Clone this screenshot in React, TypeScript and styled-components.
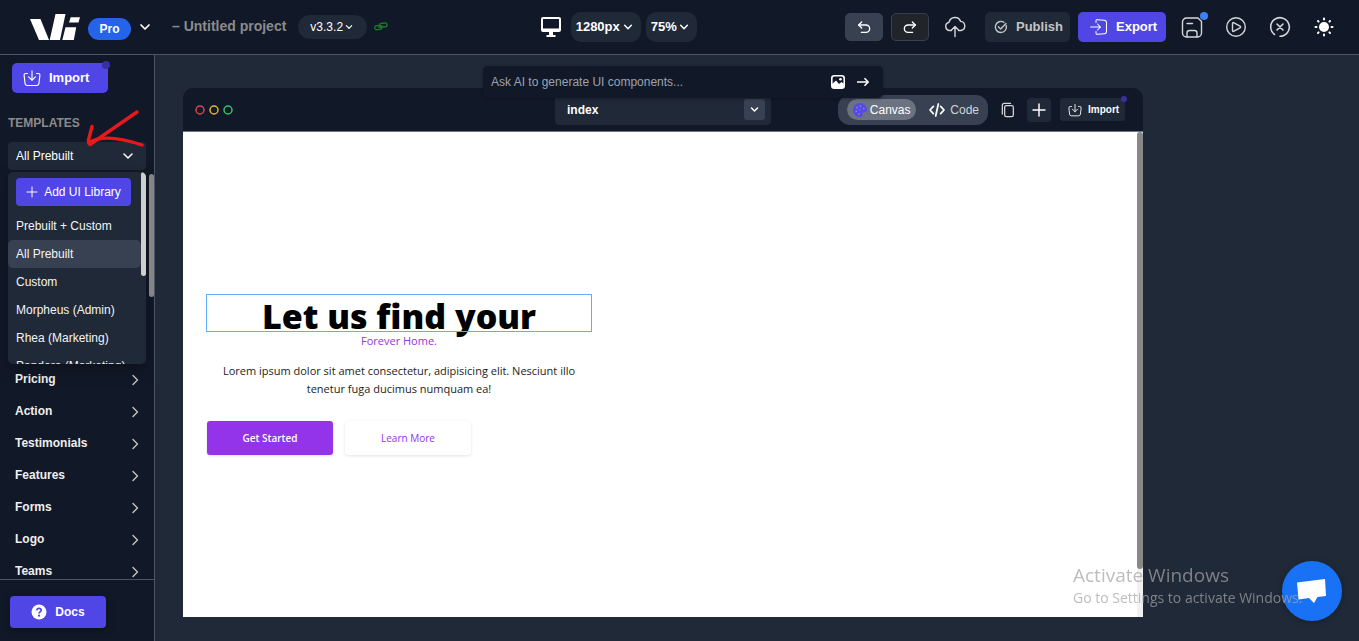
import React from "react";
import styled, { createGlobalStyle, css } from "styled-components";

const GlobalStyle = createGlobalStyle`
  *, *::before, *::after { box-sizing: border-box; }
  html, body, #root { height: 100%; }
  body {
    margin: 0;
    overflow: hidden;
    background: #1f2937;
    color: #fff;
    font: 12px/16px "Liberation Sans", Arial, sans-serif;
  }
  button, select, input { font: inherit; color: inherit; border: 0; margin: 0; padding: 0; background: none; }
  button { cursor: pointer; }
  h1, h2, p, ul { margin: 0; padding: 0; }
  ul { list-style: none; }
  svg { display: block; flex: none; }
`;

const Page = styled.div`
  display: flex;
  flex-direction: column;
  height: 100vh;
`;

/* ---------- top bar ---------- */

const Header = styled.header`
  display: flex;
  flex: none;
  align-items: center;
  justify-content: space-between;
  height: 55px;
  padding: 0 23px 0 30px;
  background: #111827;
  border-bottom: 1px solid #4b5563;
`;

const Group = styled.div<{ $gap?: number }>`
  display: flex;
  align-items: center;
  gap: ${(p) => p.$gap ?? 8}px;
`;

const Actions = styled(Group)`
  margin-left: 4px;
`;

const PlanBadge = styled.button`
  display: flex;
  align-items: center;
  justify-content: center;
  width: 43px;
  height: 22px;
  margin-top: 3px;
  border-radius: 11px;
  background: #2563eb;
  font-weight: 700;
`;

const PlainButton = styled.button`
  display: flex;
  align-items: center;
  justify-content: center;
`;

const ProjectTitle = styled.h1`
  margin: 0 4px 2px 13px;
  color: #8b8b8b;
  font-size: 14px;
  line-height: 20px;
  font-weight: 700;
  white-space: nowrap;
`;

const LinkMark = styled.a`
  display: block;
  padding: 0 4px;
  color: #1f7a2c;
`;

const SelectBox = styled.div<{ $width?: number; $height: number; $radius: number; $end: number }>`
  display: grid;
  align-items: center;
  width: ${(p) => (p.$width ? `${p.$width}px` : "100%")};
  height: ${(p) => p.$height}px;
  border-radius: ${(p) => p.$radius}px;
  background: #1f2937;
  > * { grid-area: 1 / 1; }
  > svg, > span { justify-self: end; margin-right: ${(p) => p.$end}px; pointer-events: none; }
`;

const Select = styled.select<{ $pad: number; $bold?: boolean; $size?: number }>`
  appearance: none;
  width: 100%;
  height: 100%;
  padding-left: ${(p) => p.$pad}px;
  font-size: ${(p) => p.$size ?? 12}px;
  font-weight: ${(p) => (p.$bold ? 700 : 400)};
  option { color: #fff; background: #1f2937; }
`;

const HistoryButton = styled.button<{ $dim?: boolean }>`
  display: flex;
  align-items: center;
  justify-content: center;
  width: 38px;
  height: 28px;
  border-radius: 5px;
  background: ${(p) => (p.$dim ? "#212429" : "#374151")};
  border: 1px solid #374151;
`;

const ActionButton = styled.button<{ $primary?: boolean; $width: number; $pad: number }>`
  position: relative;
  display: flex;
  align-items: center;
  gap: 8px;
  width: ${(p) => p.$width}px;
  height: 30px;
  padding-left: ${(p) => p.$pad}px;
  border-radius: 5px;
  background: ${(p) => (p.$primary ? "#4f46e5" : "#1f2937")};
  color: ${(p) => (p.$primary ? "#fff" : "#c4c4c4")};
  font-size: 13px;
  font-weight: 700;
`;

const IconButton = styled.button<{ $width?: number }>`
  position: relative;
  display: flex;
  align-items: center;
  justify-content: center;
  width: ${(p) => p.$width ?? 24}px;
  height: 24px;
  color: #d4d6da;
`;

const Dot = styled.span<{ $color: string; $top: number; $right: number; $size: number }>`
  position: absolute;
  top: ${(p) => p.$top}px;
  right: ${(p) => p.$right}px;
  width: ${(p) => p.$size}px;
  height: ${(p) => p.$size}px;
  border-radius: 50%;
  background: ${(p) => p.$color};
`;

/* ---------- sidebar ---------- */

const Body = styled.div`
  display: flex;
  flex: 1;
  min-height: 0;
`;

const Sidebar = styled.aside`
  position: relative;
  display: flex;
  flex: none;
  flex-direction: column;
  width: 155px;
  background: #111827;
  border-right: 1px solid #4b5563;
`;

const SideScroll = styled.div`
  flex: 1;
  min-height: 0;
  overflow: hidden;
  padding: 8px 8px 0;
`;

const ImportRow = styled.div`
  padding-left: 4px;
`;

const SideHeading = styled.h2`
  margin: 22px 0 11px;
  color: #8b8b8b;
  font-size: 12px;
  line-height: 16px;
  font-weight: 700;
`;

const Menu = styled.div`
  position: relative;
  height: 192px;
  margin-top: 2px;
  padding: 6px 5px 0 0;
  overflow: hidden;
  border-radius: 5px;
  background: #1f2937;
  box-shadow: 0 6px 16px rgba(0, 0, 0, 0.25);
`;

const AddLibrary = styled.button`
  display: flex;
  align-items: center;
  justify-content: center;
  gap: 6px;
  width: 115px;
  height: 28px;
  margin: 0 0 6px 8px;
  border-radius: 4px;
  background: #4f46e5;
  white-space: nowrap;
`;

const MenuItem = styled.button<{ $active?: boolean }>`
  display: block;
  width: 100%;
  height: 28px;
  padding-left: 8px;
  border-radius: 5px;
  background: ${(p) => (p.$active ? "#374151" : "transparent")};
  color: #f3f4f6;
  text-align: left;
  white-space: nowrap;
`;

const Thumb = styled.span<{ $top: number; $height: number; $light?: boolean }>`
  position: absolute;
  top: ${(p) => p.$top}px;
  right: 0;
  width: 5px;
  height: ${(p) => p.$height}px;
  border-radius: 3px;
  background: ${(p) => (p.$light ? "#cfcfcf" : "#858585")};
`;

const Category = styled.button`
  display: flex;
  align-items: center;
  justify-content: space-between;
  width: 100%;
  height: 32px;
  padding: 0 5px 0 7px;
  color: #efefef;
  font-weight: 700;
  span { padding-bottom: 2px; }
  svg { color: #bdbdbd; }
`;

const SideFooter = styled.div`
  flex: none;
  height: 62px;
  padding: 16px 10px;
  border-top: 1px solid #4b5563;
`;

const DocsLink = styled.a`
  display: flex;
  align-items: center;
  justify-content: center;
  gap: 8px;
  width: 96px;
  height: 32px;
  border-radius: 4px;
  background: #4f46e5;
  color: #fff;
  font-weight: 700;
  text-decoration: none;
  box-shadow: 0 2px 8px rgba(0, 0, 0, 0.3);
`;

const Arrow = styled.svg`
  position: absolute;
  top: 52px;
  left: 84px;
  pointer-events: none;
`;

/* ---------- workspace ---------- */

const Workspace = styled.main`
  position: relative;
  display: flex;
  flex: 1;
  min-width: 0;
  padding: 33px 28px 24px;
`;

const Prompt = styled.form`
  position: absolute;
  z-index: 2;
  top: 11px;
  left: 328px;
  display: flex;
  align-items: center;
  gap: 12px;
  width: 400px;
  height: 32px;
  padding: 0 14px 0 8px;
  border-radius: 5px;
  background: #111827;
  box-shadow: 0 1px 3px rgba(0, 0, 0, 0.3);
  input { flex: 1; min-width: 0; outline: 0; }
  input::placeholder { color: #9ca3af; opacity: 1; }
`;

const Frame = styled.section`
  display: flex;
  flex: 1;
  flex-direction: column;
  max-width: 960px;
`;

const FrameBar = styled.div`
  display: grid;
  grid-template-columns: 1fr 216px 1fr;
  align-items: center;
  flex: none;
  height: 44px;
  padding: 0 12px;
  border-radius: 10px 10px 0 0;
  border-bottom: 1px solid #6b7280;
  background: #111827;
`;

const Chip = styled.span`
  display: flex;
  align-items: center;
  justify-content: center;
  width: 21px;
  height: 21px;
  border-radius: 3px;
  background: #374151;
`;

const Tools = styled.div`
  display: flex;
  align-items: center;
  justify-content: flex-end;
  gap: 9px;
  padding-right: 6px;
`;

const ModeSwitch = styled.div`
  display: flex;
  align-items: center;
  width: 150px;
  height: 30px;
  padding: 0 9px;
  gap: 13px;
  border-radius: 12px;
  background: #374151;
`;

const ModeButton = styled.button<{ $active?: boolean }>`
  display: flex;
  align-items: center;
  justify-content: center;
  height: 21px;
  ${(p) =>
    p.$active
      ? css`gap: 3px; width: 70px; border-radius: 11px; background: #6b7280; color: #fff;`
      : css`gap: 5px; color: #d1d5db; svg { color: #fff; }`}
`;

const SquareButton = styled.button`
  display: flex;
  align-items: center;
  justify-content: center;
  width: 24px;
  height: 24px;
  border-radius: 4px;
  background: #1f2937;
`;

const SmallImport = styled.button`
  position: relative;
  display: flex;
  align-items: center;
  gap: 6px;
  width: 65px;
  height: 23px;
  padding-left: 8px;
  border-radius: 3px;
  background: #1f2937;
  font-size: 10px;
  font-weight: 700;
`;

const Preview = styled.div`
  position: relative;
  display: flex;
  flex: 1;
  align-items: center;
  padding: 0 24px;
  background: #fff;
  color: #1c1c1c;
  font-family: "Open Sans", "Noto Sans", sans-serif;
`;

const PreviewTrack = styled.span`
  position: absolute;
  top: 0;
  right: 0;
  bottom: 0;
  width: 6px;
  background: #f1f1f1;
  &::before {
    content: "";
    display: block;
    height: 90%;
    border-radius: 3px;
    background: #888;
  }
`;

const Hero = styled.div`
  width: 384px;
  text-align: center;
`;

const HeroTitle = styled.h2`
  height: 36px;
  outline: 1px solid #60aef5;
  color: #000;
  font-size: 34px;
  line-height: 42px;
  font-weight: 800;
  white-space: nowrap;
`;

const HeroAccent = styled.p`
  color: #9333ea;
  font-size: 11px;
  line-height: 20px;
`;

const HeroText = styled.p`
  margin: 11px 0 23px;
  font-size: 11px;
  line-height: 18px;
`;

const HeroButtons = styled.div`
  display: flex;
  gap: 12px;
`;

const HeroButton = styled.button<{ $primary?: boolean }>`
  width: 126px;
  height: 34px;
  border-radius: 3px;
  background: ${(p) => (p.$primary ? "#9333ea" : "#fff")};
  color: ${(p) => (p.$primary ? "#fff" : "#9333ea")};
  font-size: 10px;
  font-weight: ${(p) => (p.$primary ? 600 : 400)};
  box-shadow: 0 1px 3px rgba(0, 0, 0, 0.12);
`;

/* ---------- floating overlays ---------- */

const ChatButton = styled.button`
  position: fixed;
  right: 17px;
  bottom: 20px;
  display: flex;
  align-items: center;
  justify-content: center;
  width: 60px;
  height: 60px;
  border-radius: 50%;
  background: #1972f5;
  box-shadow: 0 1px 6px rgba(0, 0, 0, 0.2);
`;

const Watermark = styled.div`
  position: fixed;
  right: 52px;
  bottom: 33px;
  width: 234px;
  color: rgba(163, 163, 163, 0.72);
  font-family: "Open Sans", "Noto Sans", sans-serif;
  font-size: 14px;
  line-height: 20px;
  white-space: nowrap;
  pointer-events: none;
  strong { display: block; font-size: 19px; line-height: 26px; font-weight: 400; }
`;

/* ---------- icons ---------- */

type IconProps = { size?: number; children: React.ReactNode; stroke?: number };

const Icon = ({ size = 20, stroke = 1.5, children }: IconProps) => (
  <svg width={size} height={size} viewBox="0 0 24 24" fill="none" stroke="currentColor" strokeWidth={stroke} strokeLinecap="round" strokeLinejoin="round" aria-hidden="true">
    {children}
  </svg>
);

const Chevron = ({ size = 12, stroke = 3.5 }: { size?: number; stroke?: number }) => (
  <Icon size={size} stroke={stroke}><path d="M4 8l8 8 8-8" /></Icon>
);

const Logo = () => (
  <svg width="50" height="26" viewBox="0 0 50 26" fill="#fff" role="img" aria-label="Logo">
    <path d="M0 5h10.500L19 26H9z" />
    <path d="M25.500 0h10L30 26H19.700z" />
    <path d="M40.700 3.300H50L48.500 8.500H39z" />
    <path d="M35.500 13.300h10.700L43.800 26H32.300z" />
  </svg>
);

const TrayDown = ({ size = 18 }: { size?: number }) => (
  <Icon size={size} stroke={1.5}>
    <path d="M6 6H4Q1.200 6 1.500 8.500l1.200 10.500Q3 22 6 22h12q3 0 3.300-3l1.200-10.500Q22.800 6 20 6h-2" />
    <path d="M12 2.500v12.500M7.500 10.500L12 15l4.500-4.500" />
  </Icon>
);

const Ring = ({ color }: { color: string }) => (
  <svg width="10" height="10" viewBox="0 0 10 10" fill="none" stroke={color} strokeWidth="1.500" aria-hidden="true">
    <circle cx="5" cy="5" r="4" />
  </svg>
);

const categories = ["Pricing", "Action", "Testimonials", "Features", "Forms", "Logo", "Teams"];
const libraries = ["Prebuilt + Custom", "All Prebuilt", "Custom", "Morpheus (Admin)", "Rhea (Marketing)", "Pandora (Marketing)"];

export default function App() {
  return (
    <Page>
      <GlobalStyle />
      <Header>
        <Group>
          <Logo />
          <PlanBadge>Pro</PlanBadge>
          <PlainButton aria-label="Account menu"><Chevron size={12} /></PlainButton>
          <ProjectTitle>– Untitled project</ProjectTitle>
          <Group $gap={3}>
            <SelectBox $width={69} $height={24} $radius={12} $end={14}>
              <Select $pad={12} aria-label="Version"><option>v3.3.2</option></Select>
              <Chevron size={8} />
            </SelectBox>
            <LinkMark href="#share" aria-label="Share link">
              <svg width="14" height="10" viewBox="0 0 14 10" fill="none" stroke="currentColor" strokeWidth="1.300" strokeLinecap="round">
                <rect x="0.700" y="3.600" width="7" height="4" rx="2" transform="rotate(-6 4 5.600)" />
                <rect x="5.500" y="1.200" width="7.600" height="4" rx="2" transform="rotate(-6 9 3.200)" />
                <path d="M5 5l4-.8" />
              </svg>
            </LinkMark>
          </Group>
        </Group>

        <Group $gap={5}>
          <PlainButton aria-label="Desktop view">
            <svg width="25" height="20" viewBox="0 0 25 20" fill="#fff">
              <path fillRule="evenodd" d="M2 0h16a2 2 0 0 1 2 2v11a2 2 0 0 1-2 2h-6v3h2.500v2h-9v-2H8v-3H2a2 2 0 0 1-2-2V2a2 2 0 0 1 2-2zM2 2v9.500h16V2z" />
            </svg>
          </PlainButton>
          <SelectBox $width={70} $height={30} $radius={10} $end={8}>
            <Select $pad={5} $bold $size={13} aria-label="Width"><option>1280px</option></Select>
            <Chevron size={10} />
          </SelectBox>
          <SelectBox $width={51} $height={30} $radius={10} $end={8}>
            <Select $pad={5} $bold $size={13} aria-label="Zoom"><option>75%</option></Select>
            <Chevron size={10} />
          </SelectBox>
        </Group>

        <Group $gap={14}>
          <Group>
            <HistoryButton aria-label="Undo">
              <Icon size={16} stroke={2}><path d="M8.500 13.500L4 9l4.500-4.500" /><path d="M4 9h11a5.500 5.500 0 0 1 0 11H8" /></Icon>
            </HistoryButton>
            <HistoryButton $dim aria-label="Redo">
              <Icon size={16} stroke={2}><path d="M15.500 13.500L20 9l-4.500-4.500" /><path d="M20 9H9a5.500 5.500 0 0 0 0 11h7" /></Icon>
            </HistoryButton>
          </Group>
          <IconButton aria-label="Upload">
            <Icon size={24} stroke={1.4}>
              <path d="M8.500 15.500H6.700a4.200 4.200 0 0 1-.6-8.300 6 6 0 0 1 11.500-.8 4.600 4.600 0 0 1 .4 9.100h-2.500" />
              <path d="M12 21.500v-9.500M8.500 15L12 11.500l3.500 3.500" />
            </Icon>
          </IconButton>
          <Actions>
            <ActionButton $width={85} $pad={9}>
              <Icon size={14} stroke={2.400}>
                <path d="M21 9.500A9.500 9.500 0 1 1 17 4" />
                <path d="M7.500 11.500l4 4L20.500 6" />
              </Icon>
              Publish
            </ActionButton>
            <ActionButton $width={88} $pad={12} $primary>
              <Icon size={18} stroke={1.4}>
                <path d="M8 6V4q0-2 2-1.800l9 .8q3 .3 3 3v12q0 2.700-3 3l-9 .8Q8 22 8 20v-2" />
                <path d="M1 12h13M10 8l4 4-4 4" />
              </Icon>
              Export
            </ActionButton>
          </Actions>
          <Group $gap={20}>
            <IconButton aria-label="Save">
              <Icon size={24} stroke={1.4}>
                <path d="M18 3H6.500A4 4 0 0 0 2.500 7v11a4 4 0 0 0 4 4h11a4 4 0 0 0 4-4V6.500z" />
                <path d="M7 22v-4q0-2.500 2.500-2.500h5q2.500 0 2.500 2.500v4M7 8.500h5.500" />
              </Icon>
              <Dot $color="#3b82f6" $size={8} $top={-3} $right={-4} />
            </IconButton>
            <IconButton aria-label="Preview">
              <Icon size={24} stroke={1.4}>
                <circle cx="12" cy="12" r="9.300" />
                <path d="M8.500 8.800v6.400q0 1.800 1.500 1l6-3.300q1.300-.9 0-1.800l-6-3.300Q8.500 7 8.500 8.800z" />
              </Icon>
            </IconButton>
            <IconButton aria-label="Clear">
              <Icon size={24} stroke={1.6}>
                <path d="M6.500 19.500A9.300 9.300 0 1 1 12 21.300" />
                <path d="M9 9l6 6M15 9l-6 6" />
              </Icon>
            </IconButton>
            <IconButton aria-label="Light theme">
              <Icon size={24} stroke={2}>
                <circle cx="12" cy="12" r="4" fill="#fff" stroke="#fff" />
                <path stroke="#fff" d="M12 3.500v1M12 19.500v1M3.500 12h1M19.500 12h1M6 6l.6.6M17.400 17.400l.6.6M6 18l.6-.6M17.400 6.600l.6-.6" />
              </Icon>
            </IconButton>
          </Group>
        </Group>
      </Header>

      <Body>
        <Sidebar>
          <SideScroll>
            <ImportRow>
              <ActionButton $width={96} $pad={11} $primary>
                <TrayDown /> Import
                <Dot $color="#3730a3" $size={8} $top={-2} $right={-2} />
              </ActionButton>
            </ImportRow>
            <SideHeading>TEMPLATES</SideHeading>
            <SelectBox $height={28} $radius={4} $end={12}>
              <Select $pad={8} aria-label="Template library"><option>All Prebuilt</option></Select>
              <Chevron size={12} stroke={3} />
            </SelectBox>
            <Menu>
              <AddLibrary><Icon size={12} stroke={2}><path d="M12 2v20M2 12h20" /></Icon>Add UI Library</AddLibrary>
              {libraries.map((name) => (
                <MenuItem key={name} $active={name === "All Prebuilt"}>{name}</MenuItem>
              ))}
              <Thumb $light $top={0} $height={104} />
            </Menu>
            <ul>
              {categories.map((name) => (
                <li key={name}>
                  <Category>
                    <span>{name}</span>
                    <Icon size={12} stroke={3}><path d="M8 3l9 9-9 9" /></Icon>
                  </Category>
                </li>
              ))}
            </ul>
          </SideScroll>
          <Thumb $top={119} $height={123} />
          <SideFooter>
            <DocsLink href="#docs">
              <svg width="16" height="16" viewBox="0 0 16 16">
                <circle cx="8" cy="8" r="7.500" fill="#fff" />
                <path d="M5.800 6.300Q6 4.300 8 4.300t2.200 1.900Q10.200 7.200 9 8q-1 .6-1 1.500" fill="none" stroke="#4f46e5" strokeWidth="1.700" />
                <circle cx="8" cy="11.700" r="1.100" fill="#4f46e5" />
              </svg>
              Docs
            </DocsLink>
          </SideFooter>
          <Arrow width="62" height="44" viewBox="0 0 62 44" fill="none" stroke="#e8191c" strokeWidth="3.400" strokeLinecap="round" strokeLinejoin="round" aria-hidden="true">
            <path d="M53 5L6 37.500Q4 36 4.500 33L8 19.500" />
            <path d="M6 35Q22 26 58 38" />
          </Arrow>
        </Sidebar>

        <Workspace>
          <Prompt>
            <input aria-label="Prompt" placeholder="Ask AI to generate UI components..." />
            <PlainButton type="button" aria-label="Attach image">
              <svg width="14" height="14" viewBox="0 0 14 14">
                <rect x="0.800" y="0.800" width="12.400" height="12.400" rx="2.500" fill="none" stroke="#fff" strokeWidth="1.600" />
                <path d="M1 9l4-3.500L8 9l2.500-2L13 9v4H1z" fill="#fff" />
                <circle cx="9.500" cy="4.300" r="1.300" fill="#fff" />
              </svg>
            </PlainButton>
            <PlainButton type="button" aria-label="Send">
              <svg width="12" height="10" viewBox="0 0 12 10" fill="none" stroke="#fff" strokeWidth="1.600"><path d="M0 5h11M7.500 1.200L11.200 5 7.500 8.800" /></svg>
            </PlainButton>
          </Prompt>

          <Frame>
            <FrameBar>
              <Group $gap={4}>
                <Ring color="#e0454a" />
                <Ring color="#e5b72c" />
                <Ring color="#35c46a" />
              </Group>
              <SelectBox $height={31} $radius={4} $end={6}>
                <Select $pad={12} $bold aria-label="Page"><option>index</option></Select>
                <Chip><Chevron size={9} stroke={4} /></Chip>
              </SelectBox>
              <Tools>
                <ModeSwitch>
                  <ModeButton $active>
                    <svg width="14" height="14" viewBox="0 0 14 14">
                      <path d="M7 0a7 7 0 0 1 7 7c0 2-1.500 2.500-3 2.300-1.500-.2-2 .7-1.500 2C10 12.800 9 14 7 14A7 7 0 0 1 7 0z" fill="#5548ee" />
                      <g fill="#7d83a8"><circle cx="4" cy="4.500" r="1" /><circle cx="7.500" cy="3" r="1" /><circle cx="10.700" cy="5.500" r="1" /><circle cx="3.300" cy="8.200" r="1" /><circle cx="6" cy="11" r="1" /><circle cx="7" cy="7" r="0.700" /></g>
                    </svg>
                    Canvas
                  </ModeButton>
                  <ModeButton>
                    <Icon size={16} stroke={2.600}><path d="M6.500 6.500L1.500 12l5 5.500M17.500 6.500l5 5.500-5 5.500M14 3l-4 18" /></Icon>
                    Code
                  </ModeButton>
                </ModeSwitch>
                <IconButton $width={21} aria-label="Copy">
                  <Icon size={16} stroke={1.900}><path d="M3.500 18V5Q3.500 2 6.500 2H16" /><rect x="7" y="5.500" width="13" height="16.500" rx="2.500" /></Icon>
                </IconButton>
                <SquareButton aria-label="Add page"><Icon size={16} stroke={2.200}><path d="M12 3v18M3 12h18" /></Icon></SquareButton>
                <SmallImport>
                  <TrayDown size={14} /> Import
                  <Dot $color="#3730a3" $size={6} $top={-2} $right={-2} />
                </SmallImport>
              </Tools>
            </FrameBar>
            <Preview>
              <Hero>
                <HeroTitle>Let us find your</HeroTitle>
                <HeroAccent>Forever Home.</HeroAccent>
                <HeroText>Lorem ipsum dolor sit amet consectetur, adipisicing elit. Nesciunt illo tenetur fuga ducimus numquam ea!</HeroText>
                <HeroButtons>
                  <HeroButton $primary>Get Started</HeroButton>
                  <HeroButton>Learn More</HeroButton>
                </HeroButtons>
              </Hero>
              <PreviewTrack />
            </Preview>
          </Frame>
        </Workspace>
      </Body>

      <ChatButton aria-label="Open chat">
        <svg width="32" height="28" viewBox="0 0 32 28" fill="#fff"><path d="M1 5.500L29 2l1 17-8.500 1-3.500 6-5-5L2.500 22.500z" /></svg>
      </ChatButton>
      <Watermark>
        <strong>Activate Windows</strong>
        Go to Settings to activate Windows.
      </Watermark>
    </Page>
  );
}
